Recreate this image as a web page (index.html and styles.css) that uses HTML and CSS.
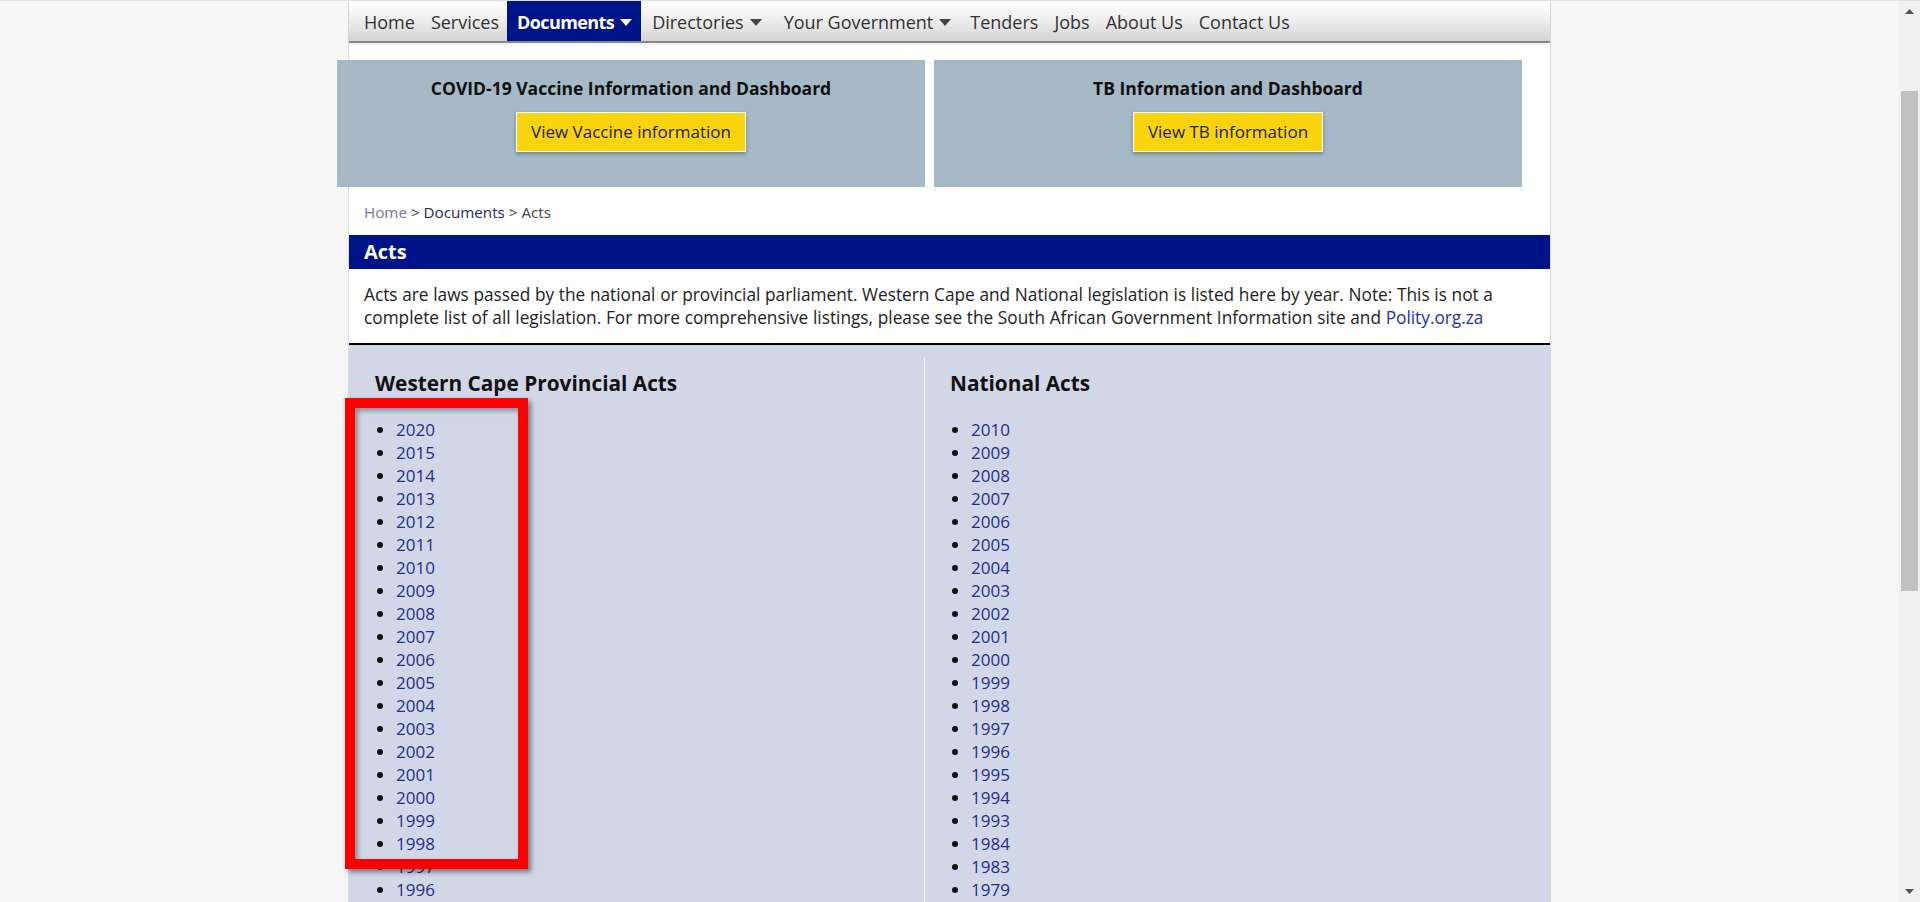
FILE: index.html
```html
<!DOCTYPE html>
<html lang="en">
<head>
<meta charset="utf-8">
<title>Acts | Western Cape Government</title>
<link rel="stylesheet" href="styles.css">
</head>
<body>
<div class="viewport">
  <div class="page">
    <nav class="topnav">
      <ul class="menu">
        <li><a href="#">Home</a></li>
        <li><a href="#">Services</a></li>
        <li class="drop active"><a href="#">Documents<svg class="caret" viewBox="0 0 12 7" width="12" height="7"><polygon points="0,0 12,0 6,7"/></svg></a></li>
        <li class="drop"><a href="#">Directories<svg class="caret" viewBox="0 0 12 7" width="12" height="7"><polygon points="0,0 12,0 6,7"/></svg></a></li>
        <li class="drop"><a href="#">Your Government<svg class="caret" viewBox="0 0 12 7" width="12" height="7"><polygon points="0,0 12,0 6,7"/></svg></a></li>
        <li><a href="#">Tenders</a></li>
        <li><a href="#">Jobs</a></li>
        <li><a href="#">About Us</a></li>
        <li><a href="#">Contact Us</a></li>
      </ul>
    </nav>

    <div class="banners">
      <div class="banner">
        <h3>COVID-19 Vaccine Information and Dashboard</h3>
        <a class="btn" href="#">View Vaccine information</a>
      </div>
      <div class="banner">
        <h3>TB Information and Dashboard</h3>
        <a class="btn" href="#">View TB information</a>
      </div>
    </div>

    <div class="breadcrumb"><a class="bc-home" href="#">Home</a> &gt; <a class="bc-doc" href="#">Documents</a> &gt; Acts</div>

    <h1 class="title-bar">Acts</h1>
    <p class="intro">Acts are laws passed by the national or provincial parliament. Western Cape and National legislation is listed here by year. Note: This is not a complete list of all legislation. For more comprehensive listings, please see the South African Government Information site and <a href="#">Polity.org.za</a></p>

    <div class="columns">
      <div class="col col-left">
        <h2>Western Cape Provincial Acts</h2>
        <ul class="years">
          <li><a href="#">2020</a></li>
          <li><a href="#">2015</a></li>
          <li><a href="#">2014</a></li>
          <li><a href="#">2013</a></li>
          <li><a href="#">2012</a></li>
          <li><a href="#">2011</a></li>
          <li><a href="#">2010</a></li>
          <li><a href="#">2009</a></li>
          <li><a href="#">2008</a></li>
          <li><a href="#">2007</a></li>
          <li><a href="#">2006</a></li>
          <li><a href="#">2005</a></li>
          <li><a href="#">2004</a></li>
          <li><a href="#">2003</a></li>
          <li><a href="#">2002</a></li>
          <li><a href="#">2001</a></li>
          <li><a href="#">2000</a></li>
          <li><a href="#">1999</a></li>
          <li><a href="#">1998</a></li>
          <li><a href="#">1997</a></li>
          <li><a href="#">1996</a></li>
        </ul>
      </div>
      <div class="col col-right">
        <h2>National Acts</h2>
        <ul class="years">
          <li><a href="#">2010</a></li>
          <li><a href="#">2009</a></li>
          <li><a href="#">2008</a></li>
          <li><a href="#">2007</a></li>
          <li><a href="#">2006</a></li>
          <li><a href="#">2005</a></li>
          <li><a href="#">2004</a></li>
          <li><a href="#">2003</a></li>
          <li><a href="#">2002</a></li>
          <li><a href="#">2001</a></li>
          <li><a href="#">2000</a></li>
          <li><a href="#">1999</a></li>
          <li><a href="#">1998</a></li>
          <li><a href="#">1997</a></li>
          <li><a href="#">1996</a></li>
          <li><a href="#">1995</a></li>
          <li><a href="#">1994</a></li>
          <li><a href="#">1993</a></li>
          <li><a href="#">1984</a></li>
          <li><a href="#">1983</a></li>
          <li><a href="#">1979</a></li>
        </ul>
      </div>
    </div>
  </div>
  <div class="highlight-box"></div>
</div>
<div class="scrollbar">
  <div class="sb-btn"><svg viewBox="0 0 9 5" width="9" height="5"><polygon points="0,5 9,5 4.5,0"/></svg></div>
  <div class="sb-track"><div class="sb-thumb"></div></div>
  <div class="sb-btn"><svg viewBox="0 0 9 5" width="9" height="5"><polygon points="0,0 9,0 4.5,5"/></svg></div>
</div>
</body>
</html>
```

FILE: styles.css
```css
html, body {
  margin: 0;
  height: 100%;
}

body {
  display: flex;
  background: #f6f6f6;
  font-family: "Open Sans", "Noto Sans", sans-serif;
  color: #222;
  overflow: hidden;
  border-top: 1px solid #e0e0e0;
  box-sizing: border-box;
}

.viewport {
  flex: 1;
  position: relative;
  overflow: hidden;
}

.page {
  width: 1201px;
  margin: 0 auto;
  min-height: 100%;
  background: #fff;
  border-left: 1px solid #dcdcdc;
  border-right: 1px solid #dcdcdc;
}

/* top navigation */
.topnav {
  height: 40px;
  background: linear-gradient(#ffffff, #f1f1f1 40%, #d3d3d3);
  border-bottom: 2px solid #888;
  box-shadow: 0 2px 3px rgba(0, 0, 0, 0.07);
}

.menu {
  display: flex;
  height: 100%;
  margin: 0;
  padding: 0 0 0 7px;
  list-style: none;
}

.menu li a {
  display: flex;
  align-items: center;
  box-sizing: border-box;
  height: 100%;
  padding: 2px 8px 0;
  font-size: 18px;
  color: #333;
  text-decoration: none;
}

.menu li.drop a {
  padding: 2px 11px 0;
}

.caret {
  margin-left: 6px;
  fill: #444;
}

.menu li.active a {
  padding: 2px 9px 0 10px;
  background: #001489;
  color: #fff;
  font-weight: 700;
  letter-spacing: -0.6px;
}

.menu li.active .caret {
  fill: #fff;
  margin-left: 6px;
}

/* banners */
.banners {
  display: flex;
  gap: 9px;
  margin: 17px 0 0 -12px;
}

.banner {
  width: 588px;
  height: 127px;
  box-sizing: border-box;
  padding-top: 15px;
  background: #a5b9c6;
  text-align: center;
}

.banner h3 {
  margin: 0 0 11px;
  font-size: 17.5px;
  line-height: 26px;
  font-weight: 700;
  color: #111;
}

.btn {
  display: inline-block;
  padding: 7px 14px;
  background: #f9d30e;
  border: 1px solid #fff;
  font-size: 17px;
  line-height: 24px;
  color: #222;
  text-decoration: none;
  box-shadow: 0 2px 4px rgba(0, 0, 0, 0.3);
}

/* breadcrumb */
.breadcrumb {
  margin-top: 15px;
  padding: 0 15px;
  font-size: 15.2px;
  line-height: 21px;
  color: #444;
}

.breadcrumb a {
  text-decoration: none;
}

.bc-home {
  color: #7077a8;
}

.bc-doc {
  color: #1d2966;
}

/* title */
.title-bar {
  margin: 12px 0 0;
  padding: 0 15px;
  height: 34px;
  line-height: 34px;
  background: #001489;
  color: #fff;
  font-size: 20px;
  font-weight: 700;
}

.intro {
  margin: 0;
  padding: 14px 15px;
  font-size: 17.25px;
  line-height: 23px;
  word-spacing: 0.2px;
  color: #222;
  border-bottom: 2px solid #000;
}

.intro a {
  color: #1a359b;
  text-decoration: none;
}

/* columns */
.columns {
  display: grid;
  grid-template-columns: 575px 1fr;
  background: #d2d7e7;
  min-height: 600px;
}

.col-left {
  padding: 27px 0 0 26px;
}

.col-right {
  margin-top: 12px;
  padding: 15px 0 0 25px;
  border-left: 1px solid #f5f6fa;
}

.col h2 {
  margin: 0;
  font-size: 20.8px;
  line-height: 22px;
  font-weight: 700;
  color: #111;
}

.years {
  margin: 24px 0 0;
  padding-left: 21px;
  font-size: 17px;
  line-height: 23px;
  color: #111;
}

.years a {
  color: #1f2d8e;
  text-decoration: none;
}

/* annotation overlay */
.highlight-box {
  position: absolute;
  left: 345px;
  top: 397px;
  width: 183px;
  height: 471px;
  box-sizing: border-box;
  border: 10px solid #ff0000;
  box-shadow: 3px 3px 5px rgba(0, 0, 0, 0.45), inset 3px 3px 5px rgba(0, 0, 0, 0.35);
}

/* scrollbar */
.scrollbar {
  width: 21px;
  flex: none;
  display: flex;
  flex-direction: column;
  background: #f0f0f0;
}

.sb-btn {
  height: 21px;
  display: flex;
  align-items: center;
  justify-content: center;
  fill: #505050;
}

.sb-track {
  flex: 1;
  padding-top: 69px;
}

.sb-thumb {
  width: 17px;
  height: 500px;
  margin-left: 2px;
  background: #c1c1c1;
}
```
